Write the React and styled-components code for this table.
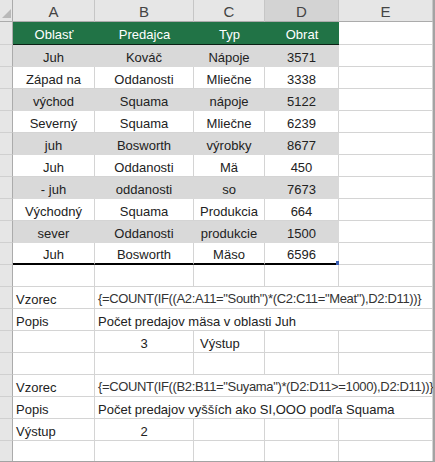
import React from "react";
import styled, { createGlobalStyle } from "styled-components";

const GlobalStyle = createGlobalStyle`
  html, body {
    margin: 0;
    padding: 0;
    background: #ffffff;
  }
  * {
    box-sizing: border-box;
  }
`;

const COLS = "13px 82px 99px 71px 74px 94px";
const GRID = "#d4d4d4";

const Sheet = styled.div`
  width: 435px;
  height: 462px;
  overflow: hidden;
  border-right: 2px solid #a3a3a3;
  border-bottom: 1px solid #a3a3a3;
  font-family: "Liberation Sans", Arial, sans-serif;
  font-size: 13px;
  color: #222;
  background: #fff;
`;

const Row = styled.div`
  display: grid;
  grid-template-columns: ${COLS};
  height: ${(p) => p.$h || 22}px;
`;

const Corner = styled.div`
  position: relative;
  background: #e6e6e6;
  border-right: 1px solid #ababab;
  border-bottom: 1px solid #ababab;
  &::after {
    content: "";
    position: absolute;
    right: 1px;
    bottom: 3px;
    width: 0;
    height: 0;
    border-left: 9px solid transparent;
    border-bottom: 9px solid #b9b9b9;
  }
`;

const ColHead = styled.div`
  display: flex;
  align-items: center;
  justify-content: center;
  background: ${(p) => (p.$active ? "#d3d3d3" : "#e6e6e6")};
  border-right: 1px solid #c6c6c6;
  border-bottom: 1px solid #ababab;
  color: #444;
  font-size: 15px;
  padding-top: 1px;
`;

const RowHead = styled.div`
  background: #e6e6e6;
  border-right: 1px solid #ababab;
  border-bottom: 1px solid #d0d0d0;
`;

const Cell = styled.div`
  display: flex;
  align-items: flex-end;
  justify-content: ${(p) => (p.$left ? "flex-start" : "center")};
  padding: 0 0 0 ${(p) => (p.$left ? p.$indent || 3 : 0)}px;
  line-height: 16px;
  white-space: nowrap;
  grid-column: span ${(p) => p.$span || 1};
  background: ${(p) => (p.$shade ? "#d9d9d9" : "#fff")};
  border-right: 1px solid ${(p) => (p.$shade ? "#d9d9d9" : GRID)};
  border-bottom: ${(p) =>
    p.$thick ? "2px solid #000" : `1px solid ${p.$shade ? "#d9d9d9" : GRID}`};
  position: relative;
`;

const GreenCell = styled.div`
  display: flex;
  align-items: center;
  justify-content: center;
  padding-top: 3px;
  background: #217346;
  color: #fff;
  border-bottom: 1px solid #0b1f14;
`;

const Formula = styled(Cell)`
  color: #333;
  letter-spacing: -0.35px;
  padding-bottom: 1px;
`;

const Handle = styled.span`
  position: absolute;
  right: -2px;
  bottom: -2px;
  width: 4px;
  height: 4px;
  background: #3a5fb5;
`;

const data = [
  ["Juh", "Kováč", "Nápoje", "3571"],
  ["Západ na", "Oddanosti", "Mliečne", "3338"],
  ["východ", "Squama", "nápoje", "5122"],
  ["Severný", "Squama", "Mliečne", "6239"],
  ["juh", "Bosworth", "výrobky", "8677"],
  ["Juh", "Oddanosti", "Mä", "450"],
  ["- juh", "oddanosti", "so", "7673"],
  ["Východný", "Squama", "Produkcia", "664"],
  ["sever", "Oddanosti", "produkcie", "1500"],
  ["Juh", "Bosworth", "Mäso", "6596"],
];

const EmptyRow = () => (
  <Row>
    <RowHead />
    <Cell />
    <Cell />
    <Cell />
    <Cell />
    <Cell />
  </Row>
);

export default function App() {
  return (
    <>
      <GlobalStyle />
      <Sheet>
        <Row>
          <Corner />
          <ColHead>A</ColHead>
          <ColHead>B</ColHead>
          <ColHead>C</ColHead>
          <ColHead $active>D</ColHead>
          <ColHead>E</ColHead>
        </Row>
        <Row $h={23}>
          <RowHead />
          <GreenCell>Oblasť</GreenCell>
          <GreenCell>Predajca</GreenCell>
          <GreenCell>Typ</GreenCell>
          <GreenCell>Obrat</GreenCell>
          <Cell />
        </Row>
        {data.map((r, i) => {
          const shade = i % 2 === 0;
          const last = i === data.length - 1;
          return (
            <Row key={i}>
              <RowHead />
              {r.map((v, j) => (
                <Cell key={j} $shade={shade} $thick={last}>
                  {v}
                  {last && j === 3 && <Handle />}
                </Cell>
              ))}
              <Cell />
            </Row>
          );
        })}
        <EmptyRow />
        <Row>
          <RowHead />
          <Cell $left>Vzorec</Cell>
          <Formula $left $span={4}>
            {'{=COUNT(IF((A2:A11="South")*(C2:C11="Meat"),D2:D11))}'}
          </Formula>
        </Row>
        <Row>
          <RowHead />
          <Cell $left>Popis</Cell>
          <Cell $left $span={4}>Počet predajov mäsa v oblasti Juh</Cell>
        </Row>
        <Row>
          <RowHead />
          <Cell />
          <Cell>3</Cell>
          <Cell $left $indent={6}>Výstup</Cell>
          <Cell />
          <Cell />
        </Row>
        <EmptyRow />
        <Row>
          <RowHead />
          <Cell $left>Vzorec</Cell>
          <Formula $left $span={4}>
            {'{=COUNT(IF((B2:B11="Suyama")*(D2:D11>=1000),D2:D11))}'}
          </Formula>
        </Row>
        <Row>
          <RowHead />
          <Cell $left>Popis</Cell>
          <Cell $left $span={4}>
            Počet predajov vyšších ako SI,OOO podľa Squama
          </Cell>
        </Row>
        <Row>
          <RowHead />
          <Cell $left>Výstup</Cell>
          <Cell>2</Cell>
          <Cell />
          <Cell />
          <Cell />
        </Row>
        <EmptyRow />
      </Sheet>
    </>
  );
}
